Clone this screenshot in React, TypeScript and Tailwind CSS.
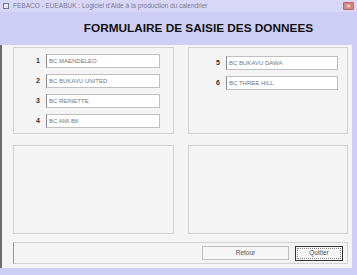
import React from 'react';

const left = [
  { n: '1', v: 'BC MAENDELEO' },
  { n: '2', v: 'BC BUKAVU UNITED' },
  { n: '3', v: 'BC REINETTE' },
  { n: '4', v: 'BC AMI BK' },
];

const right = [
  { n: '5', v: 'BC BUKAVU DAWA' },
  { n: '6', v: 'BC THREE HILL' },
];

function Field({ n, v }: { n: string; v: string }) {
  return (
    <div className="flex items-center h-[14px]">
      <span className="w-[8px] text-[7px] font-bold text-[#333]">{n}</span>
      <div className="ml-[2px] flex-1 h-[14px] bg-white border border-[#c0c0c0] border-l-[#8a8a8a] flex items-center pl-[2px]">
        <span className="text-[6px] text-[#777] leading-none">{v}</span>
      </div>
    </div>
  );
}

export default function App() {
  return (
    <div
      className="w-[357px] h-[275px] bg-[#cfcef6] flex flex-col overflow-hidden"
      style={{ fontFamily: '"Liberation Sans", Arial, sans-serif' }}
    >
      {/* title bar */}
      <div className="h-[12px] flex items-center pl-[3px] pr-[3px] bg-[#d8d7f8]">
        <div className="w-[6px] h-[6px] border border-[#6a7a9a] bg-[#e8eaf4]" />
        <span className="ml-[4px] text-[6.5px] text-[#7a7a90] leading-none">
          FEBACO - EUEABUK : Logiciel d'Aide à la production du calendrier
        </span>
        <div className="ml-auto w-[11px] h-[8px] rounded-[1px] bg-[#d88a7c] border border-[#b86a5a] flex items-center justify-center">
          <span className="text-[6px] text-white leading-none font-bold">×</span>
        </div>
      </div>

      {/* heading */}
      <div className="h-[33px] flex items-center justify-center pl-[40px]">
        <h1 className="text-[11.8px] font-bold text-[#111]">FORMULAIRE DE SAISIE DES DONNEES</h1>
      </div>

      {/* body */}
      <div className="flex-1 mr-[5px] mb-[7px] bg-[#f4f4f4] border-l-[2px] border-[#6e6e6e] pl-[11px] pr-[3px] pt-[2px] flex flex-col gap-[8px]">
        <div className="grid grid-cols-[161px_160px] gap-[14px] h-[87px]">
          <div className="border border-[#d2d2d2] pt-[6px] pl-[22px] pr-[13px] flex flex-col gap-[6px]">
            {left.map((f) => (
              <Field key={f.n} n={f.n} v={f.v} />
            ))}
          </div>
          <div className="border border-[#d2d2d2] pt-[8px] pl-[27px] pr-[9px] flex flex-col gap-[6px]">
            {right.map((f) => (
              <Field key={f.n} n={f.n} v={f.v} />
            ))}
          </div>
        </div>

        <div className="grid grid-cols-[161px_160px] gap-[14px] h-[89px] mt-[3px]">
          <div className="border border-[#d2d2d2]" />
          <div className="border border-[#d2d2d2]" />
        </div>

        <div className="h-[22px] w-[335px] border border-[#d2d2d2] border-l-[#9a9a9a] flex items-center justify-end gap-[6px] pr-[4px]">
          <button className="w-[87px] h-[14px] bg-[#f6f6f6] border border-[#c0c0c0] text-[6.5px] text-[#555] leading-none">
            Retour
          </button>
          <button className="w-[48px] h-[15px] bg-[#f6f6f6] border border-[#333] text-[6.5px] text-[#555] leading-none p-[1px]">
            <div className="w-full h-full border border-dotted border-[#888] flex items-center justify-center">Quitter</div>
          </button>
        </div>
      </div>
    </div>
  );
}
